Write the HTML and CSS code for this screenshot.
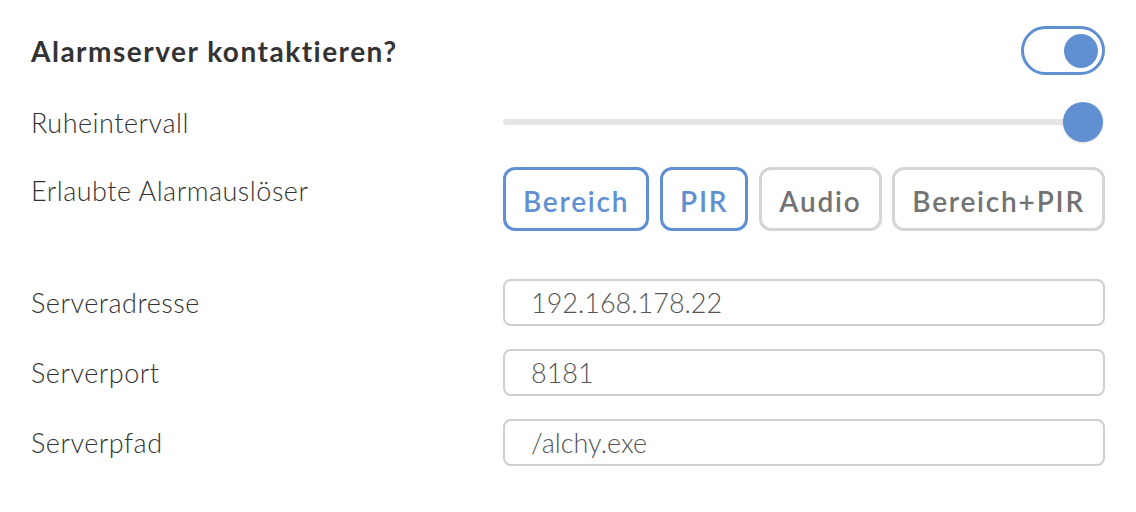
FILE: index.html
```html
<!DOCTYPE html>
<html lang="de">
<head>
<meta charset="utf-8">
<title>Alarmserver</title>
<link rel="stylesheet" href="styles.css">
</head>
<body>
<div class="form">
  <div class="row row-title">
    <div class="label title">Alarmserver kontaktieren?</div>
    <div class="control control-end">
      <div class="toggle"><span class="knob"></span></div>
    </div>
  </div>
  <div class="row row-slider">
    <div class="label">Ruheintervall</div>
    <div class="control">
      <div class="slider"><div class="track"></div><span class="thumb"></span></div>
    </div>
  </div>
  <div class="row row-buttons">
    <div class="label label-top">Erlaubte Alarmauslöser</div>
    <div class="control buttons">
      <button class="chip active">Bereich</button>
      <button class="chip active">PIR</button>
      <button class="chip">Audio</button>
      <button class="chip">Bereich+PIR</button>
    </div>
  </div>
  <div class="row row-input first">
    <div class="label">Serveradresse</div>
    <div class="control"><input class="field" type="text" value="192.168.178.22"></div>
  </div>
  <div class="row row-input">
    <div class="label">Serverport</div>
    <div class="control"><input class="field" type="text" value="8181"></div>
  </div>
  <div class="row row-input">
    <div class="label">Serverpfad</div>
    <div class="control"><input class="field" type="text" value="/alchy.exe"></div>
  </div>
</div>
</body>
</html>
```

FILE: styles.css
```css
html, body {
  margin: 0;
  padding: 0;
  background: #ffffff;
}
body {
  font-family: "Lato", "Open Sans", sans-serif;
  color: #333333;
  width: 1136px;
  height: 512px;
  overflow: hidden;
}
.form {
  padding: 26px 31px 0 31px;
}
.row {
  display: flex;
  align-items: center;
}
.label {
  width: 472px;
  flex: none;
  font-size: 27px;
  font-weight: 300;
  letter-spacing: 0.5px;
  color: #333333;
}
.title {
  font-size: 28px;
  font-weight: 700;
  letter-spacing: 1.5px;
  color: #333333;
}
.label-top {
  align-self: flex-start;
  padding-top: 7px;
}
.control {
  flex: 1;
  display: flex;
}
.control-end {
  justify-content: flex-end;
}
.row-title {
  height: 49px;
}
.toggle {
  box-sizing: border-box;
  width: 84px;
  height: 49px;
  border: 3px solid #6090d2;
  border-radius: 25px;
  display: flex;
  align-items: center;
  justify-content: flex-end;
  padding-right: 4px;
}
.knob {
  width: 34px;
  height: 34px;
  border-radius: 50%;
  background: #6090d2;
}
.row-slider {
  margin-top: 27px;
  height: 40px;
}
.slider {
  position: relative;
  flex: 1;
  height: 40px;
  display: flex;
  align-items: center;
}
.track {
  width: 580px;
  height: 6px;
  border-radius: 3px;
  background: #e6e6e6;
}
.thumb {
  position: absolute;
  right: 2px;
  top: 0;
  width: 40px;
  height: 40px;
  border-radius: 50%;
  background: #6090d2;
  box-shadow: 0 1px 2px rgba(0,0,0,0.15);
}
.row-buttons {
  margin-top: 25px;
}
.buttons {
  justify-content: space-between;
}
.chip {
  box-sizing: border-box;
  height: 64px;
  padding: 4px 17px 0 17px;
  border: 3px solid #d5d5d5;
  border-radius: 12px;
  background: #ffffff;
  font-family: "Lato", "Open Sans", sans-serif;
  font-size: 28px;
  font-weight: 600;
  color: #737373;
  letter-spacing: 1.8px;
}
.chip.active {
  border-color: #6090d2;
  color: #6090d2;
}
.row-input.first {
  margin-top: 48px;
}
.row-input {
  margin-top: 23px;
}
.field {
  box-sizing: border-box;
  width: 100%;
  height: 47px;
  border: 2px solid #cfcfcf;
  border-radius: 8px;
  padding: 0 0 0 26px;
  font-family: "Lato", "Open Sans", sans-serif;
  font-size: 27px;
  font-weight: 300;
  color: #555555;
  background: #ffffff;
  outline: none;
}
```
